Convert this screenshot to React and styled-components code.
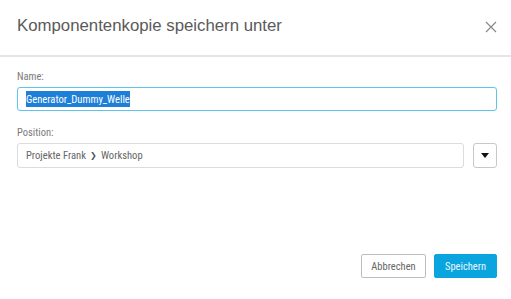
import React from "react";
import styled, { createGlobalStyle } from "styled-components";

const Global = createGlobalStyle`
  html, body { margin: 0; padding: 0; background: #fff; }
  body { font-family: Roboto, "Liberation Sans", Arial, sans-serif; font-stretch: condensed; }
`;

const Dialog = styled.div`
  width: 511px;
  height: 299px;
  display: flex;
  flex-direction: column;
  background: #fff;
`;

const Header = styled.div`
  height: 55px;
  display: flex;
  align-items: center;
  justify-content: space-between;
  padding: 0 14px 0 17px;
  border-bottom: 2px solid #e6e6e6;
`;

const Title = styled.h1`
  margin: -3px 0 0;
  font-family: "Liberation Sans", Arial, sans-serif;
  font-stretch: normal;
  font-weight: normal;
  font-size: 16.8px;
  color: #5a5a5a;
`;

const Close = styled.button`
  border: 0;
  background: none;
  padding: 0;
  width: 12px;
  height: 12px;
  margin-top: -2px;
  display: flex;
  cursor: pointer;
`;

const Body = styled.div`
  flex: 1;
  display: flex;
  flex-direction: column;
  padding: 14px 14px 0 17px;
`;

const Label = styled.label`
  font-size: 10.5px;
  color: #7a7a7a;
  line-height: 12px;
  margin-bottom: 4px;
`;

const Field = styled.div`
  display: flex;
  gap: 9px;
  margin-bottom: ${(p) => p.$mb || 0}px;
`;

const Input = styled.div`
  flex: 1;
  height: ${(p) => p.$h}px;
  box-sizing: border-box;
  border: 1px solid ${(p) => (p.$focus ? "#5ec4ec" : "#dcdcdc")};
  border-radius: 3px;
  display: flex;
  align-items: center;
  padding: 0 8px;
  font-size: 10.6px;
  color: #666;
`;

const Selected = styled.span`
  background: #1e7fd8;
  color: #fff;
  padding: 1.5px 0;
`;

const Chevron = styled.span`
  margin: 0 4px;
  font-size: 7.5px;
  color: #555;
`;

const DropBtn = styled.button`
  width: 24px;
  height: 25px;
  box-sizing: border-box;
  border: 1px solid #c8c8c8;
  border-radius: 3px;
  background: #fff;
  display: flex;
  align-items: center;
  justify-content: center;
  padding: 0;
`;

const Footer = styled.div`
  display: flex;
  justify-content: flex-end;
  gap: 8px;
  padding: 0 14px 21px 17px;
`;

const Button = styled.button`
  height: 24px;
  box-sizing: border-box;
  border-radius: 2px;
  font-family: Roboto, "Liberation Sans", Arial, sans-serif;
  font-stretch: condensed;
  font-size: 10.5px;
  padding: 0;
  width: ${(p) => p.$w}px;
  border: 1px solid ${(p) => (p.$primary ? "#0aa5df" : "#bdbdbd")};
  background: ${(p) => (p.$primary ? "#0aa5df" : "#fff")};
  color: ${(p) => (p.$primary ? "#e8f6fc" : "#666")};
`;

export default function App() {
  return (
    <>
      <Global />
      <Dialog>
        <Header>
          <Title>Komponentenkopie speichern unter</Title>
          <Close aria-label="Schließen">
            <svg width="12" height="12" viewBox="0 0 12 12">
              <path d="M1 1L11 11M11 1L1 11" stroke="#8a8a8a" strokeWidth="1.2" />
            </svg>
          </Close>
        </Header>
        <Body>
          <Label>Name:</Label>
          <Field $mb={16}>
            <Input $h={24} $focus>
              <Selected>Generator_Dummy_Welle</Selected>
            </Input>
          </Field>
          <Label>Position:</Label>
          <Field>
            <Input $h={25}>
              Projekte Frank<Chevron>❯</Chevron>Workshop
            </Input>
            <DropBtn aria-label="Auswählen">
              <svg width="8" height="5" viewBox="0 0 8 5">
                <path d="M0 0H8L4 5Z" fill="#111" />
              </svg>
            </DropBtn>
          </Field>
        </Body>
        <Footer>
          <Button $w={65}>Abbrechen</Button>
          <Button $w={63} $primary>Speichern</Button>
        </Footer>
      </Dialog>
    </>
  );
}
